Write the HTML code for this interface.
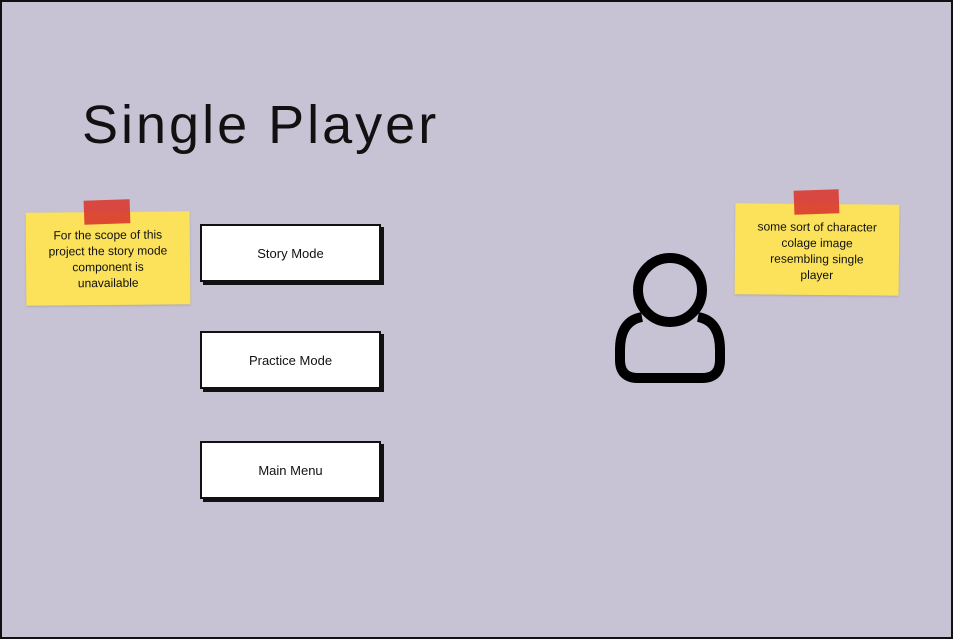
<!DOCTYPE html>
<html><head><style>
body{margin:0;width:953px;height:639px;overflow:hidden;background:#fff;font-family:"Liberation Sans",sans-serif}
.page{position:absolute;left:0;top:0;width:949px;height:635px;border:2px solid #111;background:#c7c3d4}
.title{position:absolute;left:80px;top:92px;font-size:54px;color:#111;letter-spacing:3px}
.btn{position:absolute;left:198px;width:177px;height:54px;background:#fff;border:2px solid #111;box-shadow:3px 3px 0 #111;font-size:13px;display:flex;align-items:center;justify-content:center;color:#111}
.note{position:absolute;background:#fbe25a;font-size:12px;line-height:16px;text-align:center;color:#111;box-shadow:0 1px 2px rgba(0,0,0,.15)}
.tape{position:absolute;background:#d93a30;opacity:.9;transform:rotate(-2deg)}
</style></head><body>
<div class="page">
<div class="title">Single Player</div>
<div class="note" style="left:24px;top:210px;width:164px;height:93px;transform:rotate(-0.5deg)"><div style="padding-top:15px">For the scope of this<br>project the story mode<br>component is<br>unavailable</div></div>
<div class="tape" style="left:82px;top:198px;width:46px;height:24px"></div>
<div class="note" style="left:733px;top:202px;width:164px;height:91px;transform:rotate(0.5deg)"><div style="padding-top:15px">some sort of character<br>colage image<br>resembling single<br>player</div></div>
<div class="tape" style="left:792px;top:188px;width:45px;height:24px"></div>
<div class="btn" style="top:222px">Story Mode</div>
<div class="btn" style="top:329px">Practice Mode</div>
<div class="btn" style="top:439px">Main Menu</div>
<svg style="position:absolute;left:598px;top:240px" width="140" height="150">
<circle cx="70" cy="48" r="32" fill="none" stroke="#000" stroke-width="10"/>
<path d="M42 75 C25 78 20 92 20 108 L20 118 Q20 136 38 136 L102 136 Q120 136 120 118 L120 108 C120 92 115 78 98 75" fill="none" stroke="#000" stroke-width="10" stroke-linejoin="round"/>
</svg>
</div>
</body></html>
